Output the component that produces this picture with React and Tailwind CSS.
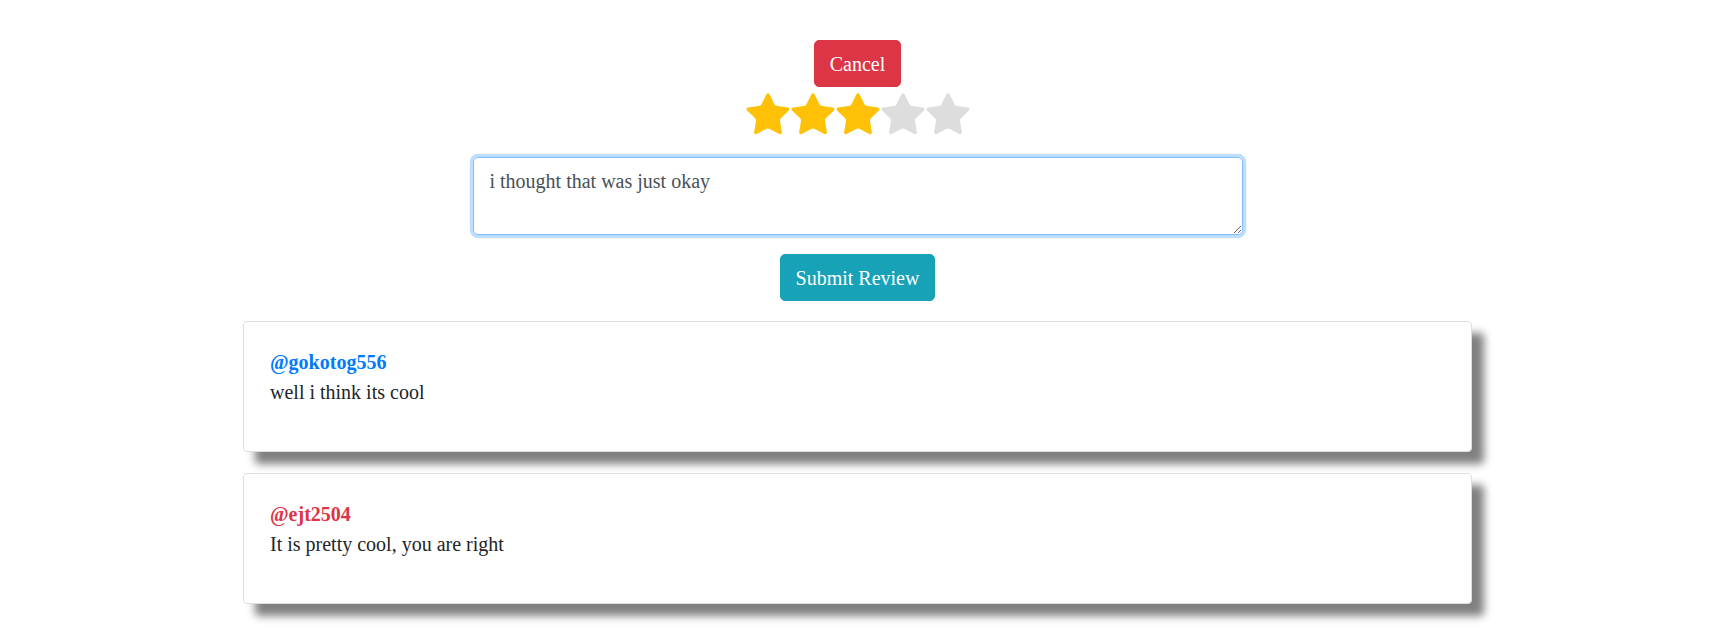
import React, { useEffect, useRef, useState } from "react";

const reviews = [
  { user: "@gokotog556", text: "well i think its cool", color: "text-[#007bff]" },
  { user: "@ejt2504", text: "It is pretty cool, you are right", color: "text-[#dc3545]" },
];

const Star = ({ filled }) => (
  <svg
    width="42"
    height="40"
    viewBox="2 2.1 20 19.2"
    className="overflow-visible"
    fill={filled ? "#ffc107" : "#dddddd"}
    stroke={filled ? "#ffc107" : "#dddddd"}
    strokeWidth="0.6"
    strokeLinejoin="round"
  >
    <path d="M11.525 2.295a.53.53 0 0 1 .95 0l2.31 4.679a2.123 2.123 0 0 0 1.595 1.16l5.166.756a.53.53 0 0 1 .294.904l-3.736 3.638a2.123 2.123 0 0 0-.611 1.878l.882 5.14a.53.53 0 0 1-.771.56l-4.618-2.428a2.122 2.122 0 0 0-1.973 0L6.396 21.01a.53.53 0 0 1-.77-.56l.881-5.139a2.122 2.122 0 0 0-.611-1.879L2.16 9.795a.53.53 0 0 1 .294-.906l5.165-.755a2.122 2.122 0 0 0 1.597-1.16z" />
  </svg>
);

const App = () => {
  const [rating, setRating] = useState(3);
  const [review, setReview] = useState("i thought that was just okay");
  const boxRef = useRef(null);

  useEffect(() => {
    const el = boxRef.current;
    if (el) {
      el.focus();
      el.setSelectionRange(el.value.length, el.value.length);
    }
  }, []);

  return (
    <div className="w-[1715px] flex flex-col items-center pt-[40px] pb-[40px] font-['Liberation_Serif',serif] text-[20px] leading-[30px]">
      <button className="h-[47px] px-[15px] bg-[#dc3545] border border-[#dc3545] rounded-[5px] text-white">
        Cancel
      </button>

      <div className="flex gap-[3px] mt-[7px]">
        {[1, 2, 3, 4, 5].map((n) => (
          <span key={n} className="cursor-pointer" onClick={() => setRating(n)}>
            <Star filled={n <= rating} />
          </span>
        ))}
      </div>

      <textarea
        ref={boxRef}
        rows={2}
        value={review}
        onChange={(e) => setReview(e.target.value)}
        className="mt-[23px] w-[770px] h-[78px] px-4 py-2 border border-[#80bdff] rounded-[5px] text-[#495057] outline-none shadow-[0_0_0_3.2px_rgba(0,123,255,0.25)]"
      />

      <button className="mt-[19px] h-[47px] px-[15px] bg-[#17a2b8] border border-[#17a2b8] rounded-[5px] text-white">
        Submit Review
      </button>

      <div className="mt-[20px] flex flex-col gap-[21px]">
        {reviews.map((r) => (
          <div
            key={r.user}
            className="w-[1229px] h-[131px] bg-white border border-[#dfdfdf] rounded-[4px] pt-[25px] px-[26px] shadow-[12px_12px_8px_#808080]"
          >
            <h5 className={`font-bold ${r.color}`}>{r.user}</h5>
            <p className="text-[#212529]">{r.text}</p>
          </div>
        ))}
      </div>
    </div>
  );
};

export default App;
